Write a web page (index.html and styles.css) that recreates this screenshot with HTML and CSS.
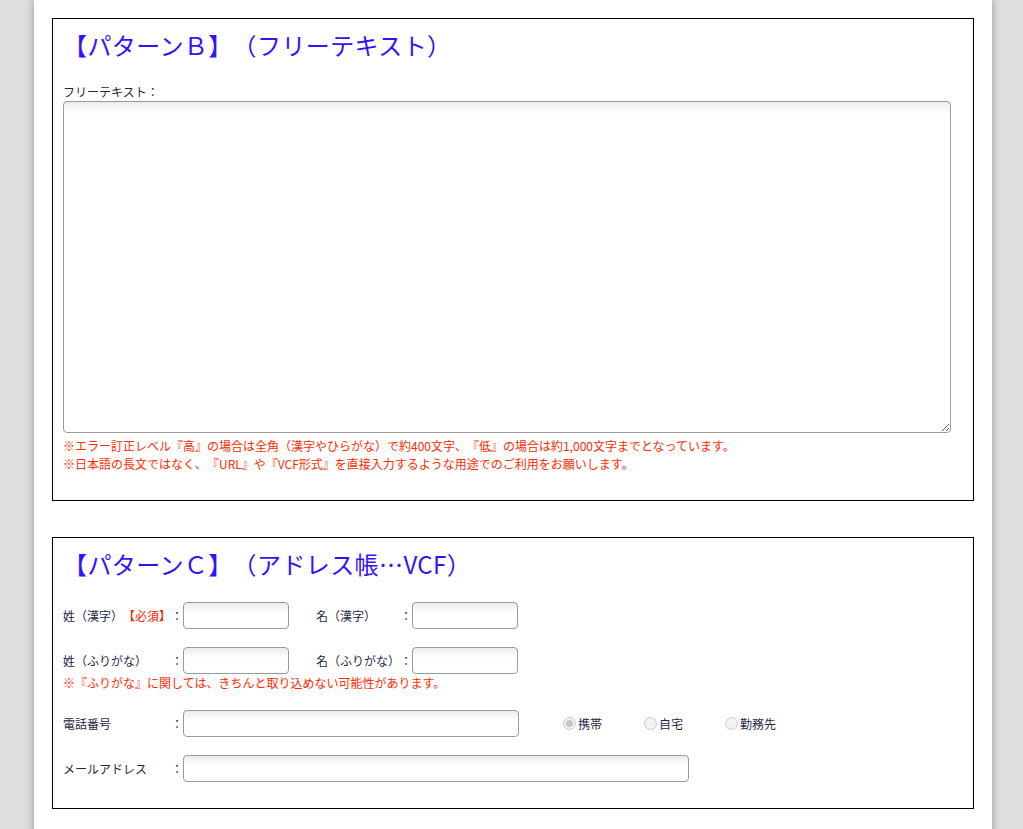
FILE: index.html
```html
<!DOCTYPE html>
<html lang="ja">
<head>
<meta charset="utf-8">
<title>QRコード作成</title>
<link rel="stylesheet" href="styles.css">
</head>
<body>
<div class="page">
  <section class="box box-b">
    <h2 class="title">【パターンＢ】（フリーテキスト）</h2>
    <label class="lbl" for="free">フリーテキスト：</label>
    <textarea id="free" class="free"></textarea>
    <p class="note first">※エラー訂正レベル『高』の場合は全角（漢字やひらがな）で約400文字、『低』の場合は約1,000文字までとなっています。</p>
    <p class="note">※日本語の長文ではなく、『URL』や『VCF形式』を直接入力するような用途でのご利用をお願いします。</p>
  </section>

  <section class="box box-c">
    <h2 class="title">【パターンＣ】（アドレス帳…VCF）</h2>
    <div class="row">
      <span class="key w1">姓（漢字）<em class="req">【必須】</em></span><span class="colon">：</span><input class="inp short" type="text">
      <span class="key w2">名（漢字）</span><span class="colon">：</span><input class="inp short" type="text">
    </div>
    <div class="row">
      <span class="key w1">姓（ふりがな）</span><span class="colon">：</span><input class="inp short" type="text">
      <span class="key w2">名（ふりがな）</span><span class="colon">：</span><input class="inp short" type="text">
    </div>
    <p class="note">※『ふりがな』に関しては、きちんと取り込めない可能性があります。</p>
    <div class="row">
      <span class="key w1">電話番号</span><span class="colon">：</span><input class="inp tel" type="text">
      <div class="radios">
        <label class="radio"><span class="dot on"></span>携帯</label>
        <label class="radio"><span class="dot"></span>自宅</label>
        <label class="radio"><span class="dot"></span>勤務先</label>
      </div>
    </div>
    <div class="row">
      <span class="key w1">メールアドレス</span><span class="colon">：</span><input class="inp mail" type="text">
    </div>
  </section>
</div>
</body>
</html>
```

FILE: styles.css
```css
html, body {
  margin: 0;
  padding: 0;
  background: #dedede;
  height: 100%;
}
body {
  font-family: "Noto Sans CJK JP", "Liberation Sans", sans-serif;
  font-size: 12px;
  color: #1e2745;
  text-spacing-trim: space-all;
}
.page {
  width: 922px;
  margin: 0 0 0 34px;
  padding: 18px 18px 40px;
  background: #fff;
  box-shadow: 0 0 8px rgba(0, 0, 0, 0.35);
  min-height: 100%;
  box-sizing: content-box;
}
.box {
  border: 1px solid #000;
  padding: 8px 10px 26px;
}
.box-b {
  padding-bottom: 27px;
  margin-bottom: 36px;
}
.title {
  margin: 0;
  font-size: 24px;
  line-height: 36px;
  font-weight: normal;
  letter-spacing: 0.4px;
  color: #3511ff;
}
.lbl {
  display: block;
  margin-top: 20px;
  line-height: 18px;
}
.free {
  display: block;
  width: 888px;
  height: 332px;
  box-sizing: border-box;
  margin: 0;
  border: 1px solid #9a9a9a;
  border-radius: 4px;
  background: linear-gradient(#ececec, #fff 12px);
  resize: vertical;
  font: inherit;
}
.note {
  margin: 0;
  line-height: 18px;
  color: #ff2a00;
}
.note.first {
  margin-top: 4px;
}
.row {
  display: flex;
  align-items: center;
  margin-top: 18px;
  height: 27px;
}
.box-c .title + .row {
  margin-top: 20px;
}
.key {
  display: inline-block;
  white-space: nowrap;
}
.w1 { width: 108px; }
.w2 { width: 84px; margin-left: 27px; }
.req {
  font-style: normal;
  color: #ff1a00;
}
.colon {
  display: inline-block;
  width: 12px;
  text-align: center;
}
.inp {
  box-sizing: border-box;
  height: 27px;
  margin: 0;
  padding: 0 6px;
  border: 1px solid #9a9a9a;
  border-radius: 4px;
  background: linear-gradient(#ececec, #fff 10px);
  font: inherit;
}
.short { width: 106px; }
.tel { width: 336px; }
.mail { width: 506px; }
.radios {
  display: flex;
  margin-left: 44px;
}
.radio {
  display: flex;
  align-items: center;
  width: 81px;
  color: #1e2745;
}
.dot {
  width: 11px;
  height: 11px;
  border: 1px solid #c9c9c9;
  border-radius: 50%;
  background: #f3f3f3;
  margin-right: 2px;
  position: relative;
}
.dot.on::after {
  content: "";
  position: absolute;
  left: 2px;
  top: 2px;
  width: 7px;
  height: 7px;
  border-radius: 50%;
  background: #c4c4c4;
}
```
